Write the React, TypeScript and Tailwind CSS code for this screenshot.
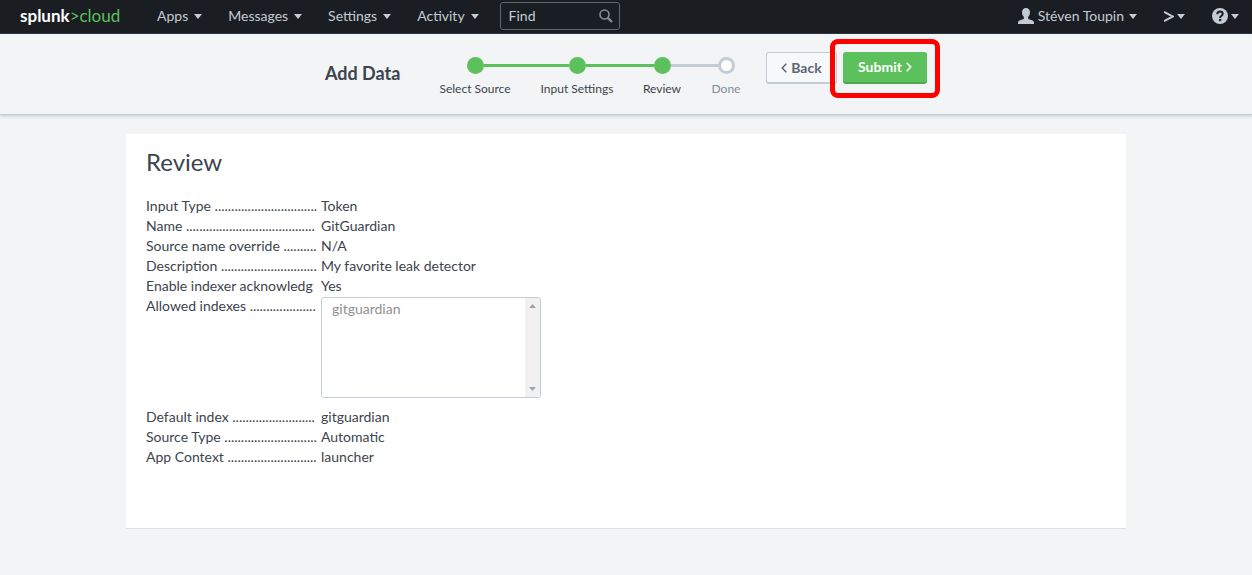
import { clsx } from 'clsx'

const menus = ['Apps', 'Messages', 'Settings', 'Activity']

const steps = [
  { label: 'Select Source', width: 'w-[102px]', state: 'done' },
  { label: 'Input Settings', width: 'w-[102px]', state: 'done' },
  { label: 'Review', width: 'w-[68px]', state: 'current' },
  { label: 'Done', width: 'w-[60px]', state: 'pending' }
]

// dots = length of the leader between the label and its value
const details = [
  { label: 'Input Type', dots: 31, value: 'Token' },
  { label: 'Name', dots: 39, value: 'GitGuardian' },
  { label: 'Source name override', dots: 10, value: 'N/A' },
  { label: 'Description', dots: 29, value: 'My favorite leak detector' },
  { label: 'Enable indexer acknowledg', dots: 0, value: 'Yes' }
]

const indexDetails = [
  { label: 'Default index', dots: 25, value: 'gitguardian' },
  { label: 'Source Type', dots: 28, value: 'Automatic' },
  { label: 'App Context', dots: 27, value: 'launcher' }
]

function Caret() {
  return (
    <svg viewBox="0 0 8 5" className="h-[5px] w-2 shrink-0" fill="currentColor" aria-hidden="true">
      <path d="M0 0h8L4 5z" />
    </svg>
  )
}

function Chevron({ direction }: { direction: 'left' | 'right' }) {
  return (
    <svg
      viewBox="0 0 6 10"
      className="h-[10px] w-[6px] shrink-0"
      fill="none"
      stroke="currentColor"
      strokeWidth="1.5"
      aria-hidden="true"
    >
      <path d={direction === 'left' ? 'M5.300 .7L1.200 5l4.100 4.300' : 'M.7 .7L4.800 5L.7 9.300'} />
    </svg>
  )
}

function UserIcon() {
  return (
    <svg viewBox="0 0 16 16" className="size-4" fill="currentColor" aria-hidden="true">
      <path d="M8 0C5.600 0 4 1.700 4 4.200c0 2 .7 3.700 1.900 4.700v1.300c0 .5-.3.8-.8 1L2 12.300C.7 12.800 0 13.600 0 14.800V16h16v-1.200c0-1.200-.7-2-2-2.500l-3.100-1.100c-.5-.2-.8-.5-.8-1V8.900C11.300 7.900 12 6.200 12 4.200 12 1.700 10.400 0 8 0z" />
    </svg>
  )
}

function HelpIcon() {
  return (
    <svg viewBox="0 0 16 16" className="size-4" aria-hidden="true">
      <circle cx="8" cy="8" r="8" fill="#c3cbd4" />
      <path
        d="M5.300 6.200C5.400 4.500 6.500 3.600 8 3.600c1.700 0 2.700.9 2.700 2.300C10.700 7.700 8.100 7.800 8.100 9.900"
        fill="none"
        stroke="#1a1e22"
        strokeWidth="2"
      />
      <rect x="7" y="11" width="2.200" height="2.100" fill="#1a1e22" />
    </svg>
  )
}

function TopBar() {
  return (
    <header className="flex h-[34px] items-center border-b border-[#2b3340] bg-[#1a1e22] pb-px pl-5 pr-[13px] text-sm text-[#c3cbd4]">
      <a href="#" className="w-[137px] text-[17px] leading-6 text-[#5cc05c]">
        <span className="font-bold text-white">splunk</span>&gt;cloud
      </a>
      <nav className="flex items-center gap-[26px]">
        {menus.map((menu) => (
          <button key={menu} type="button" className="flex items-center gap-[6px]">
            {menu}
            <Caret />
          </button>
        ))}
      </nav>
      <div className="ml-[21px] flex h-7 w-[120px] items-center rounded-[3px] border border-[#5c6773] pl-2 pr-[6px]">
        <input
          type="text"
          aria-label="Find"
          placeholder="Find"
          className="w-full min-w-0 bg-transparent placeholder:text-[#c3cbd4] focus:outline-none"
        />
        <svg viewBox="0 0 14 14" className="size-[14px] shrink-0" fill="none" stroke="#818d99" aria-hidden="true">
          <circle cx="5.500" cy="5.500" r="4.500" strokeWidth="1.600" />
          <path d="M8.800 8.800L13 13" strokeWidth="2.400" />
        </svg>
      </div>
      <div className="ml-auto flex items-center gap-[27px]">
        <button type="button" className="flex items-center gap-1">
          <UserIcon />
          <span className="mr-px">Stéven Toupin</span>
          <Caret />
        </button>
        <button type="button" aria-label="Apps console" className="flex items-center gap-[3px]">
          <svg viewBox="0 0 10 12" className="h-3 w-[10px]" fill="none" stroke="currentColor" strokeWidth="2" aria-hidden="true">
            <path d="M0 2L9 6.500L0 11" />
          </svg>
          <Caret />
        </button>
        <button type="button" aria-label="Help" className="flex items-center gap-[3px]">
          <HelpIcon />
          <Caret />
        </button>
      </div>
    </header>
  )
}

function Stepper() {
  return (
    <ol className="flex text-xs">
      {steps.map((step, index) => {
        const pending = step.state === 'pending'
        return (
          <li key={step.label} className={clsx('flex flex-col items-center', step.width)}>
            <div className="flex w-full items-center">
              <span className={clsx('h-[3px] flex-1', index > 0 && (pending ? 'bg-[#c3cbd4]' : 'bg-[#5cc05c]'))} />
              <span
                className={clsx(
                  'size-[17px] rounded-full',
                  pending ? 'border-[3px] border-[#c3cbd4] bg-white' : 'bg-[#5cc05c]'
                )}
              />
              <span
                className={clsx(
                  'h-[3px] flex-1',
                  step.state === 'done' && 'bg-[#5cc05c]',
                  step.state === 'current' && 'bg-[#c3cbd4]'
                )}
              />
            </div>
            <span className={clsx('mt-[7px] whitespace-nowrap leading-4', pending && 'text-[#818d99]')}>
              {step.label}
            </span>
          </li>
        )
      })}
    </ol>
  )
}

function WizardBar() {
  return (
    <div className="flex h-[81px] justify-center border-b border-[#c3cbd4] shadow-[0_1px_3px_rgba(60,80,110,0.25)]">
      <h1 className="mr-6 w-[75px] whitespace-nowrap pt-[27px] text-lg font-bold leading-6">Add Data</h1>
      <div className="pt-[23px]">
        <Stepper />
      </div>
      <div className="ml-[10px] flex gap-[6px] pt-[18px] text-sm font-bold">
        <button
          type="button"
          className="flex h-8 w-[71px] items-center justify-center gap-1 rounded-[3px] border border-b-2 border-[#c3cbd4] bg-[#f7f8fa] text-[#5c6773]"
        >
          <Chevron direction="left" />
          Back
        </button>
        <div className="relative h-8">
          <button
            type="button"
            className="flex h-8 w-21 items-center justify-center gap-1 rounded-[3px] border-b-2 border-[#4fa84f] bg-[#5cc05c] text-white"
          >
            Submit
            <Chevron direction="right" />
          </button>
          <span className="pointer-events-none absolute -inset-x-[13px] -bottom-[14px] -top-[13px] rounded-lg border-5 border-[#ff0000]" />
        </div>
      </div>
    </div>
  )
}

function DetailLabel({ label, dots }: { label: string; dots: number }) {
  return (
    <dt className="mr-[5px] w-[170px] shrink-0 whitespace-nowrap">
      {label} {'.'.repeat(dots)}
    </dt>
  )
}

function DetailRow({ label, dots, value }: { label: string; dots: number; value: string }) {
  return (
    <div className="flex">
      <DetailLabel label={label} dots={dots} />
      <dd>{value}</dd>
    </div>
  )
}

function AllowedIndexes() {
  return (
    <div className="mb-[9px] flex">
      <DetailLabel label="Allowed indexes" dots={20} />
      <dd className="mt-px flex h-[101px] w-[220px] overflow-hidden rounded-[3px] border border-[#c3cbd4] bg-white">
        <select
          multiple
          disabled
          aria-label="Allowed indexes"
          className="h-full flex-1 appearance-none overflow-hidden bg-white pl-[10px] pt-[2px] opacity-100"
        >
          <option className="text-[#909090]">gitguardian</option>
        </select>
        <div className="flex w-[15px] flex-col items-center justify-between bg-[#f1f1f2] py-[6px] text-[#a3a3a3]">
          <svg viewBox="0 0 7 4" className="h-1 w-[7px]" fill="currentColor" aria-hidden="true">
            <path d="M0 4h7L3.500 0z" />
          </svg>
          <svg viewBox="0 0 7 4" className="h-1 w-[7px]" fill="currentColor" aria-hidden="true">
            <path d="M0 0h7L3.500 4z" />
          </svg>
        </div>
      </dd>
    </div>
  )
}

export default function App() {
  return (
    <div className="min-h-screen bg-[#f2f4f5] pb-10 font-[Lato,'Liberation_Sans',sans-serif] text-[#3c444d]">
      <TopBar />
      <WizardBar />
      <main className="mx-auto mt-[19px] w-full max-w-[1000px] border-b border-[#dde2e8] bg-white px-5 pb-[61px] pt-[15px]">
        <h2 className="mb-[21px] text-2xl leading-[26px]">Review</h2>
        <dl className="text-sm leading-5">
          {details.map((detail) => (
            <DetailRow key={detail.label} {...detail} />
          ))}
          <AllowedIndexes />
          {indexDetails.map((detail) => (
            <DetailRow key={detail.label} {...detail} />
          ))}
        </dl>
      </main>
    </div>
  )
}
